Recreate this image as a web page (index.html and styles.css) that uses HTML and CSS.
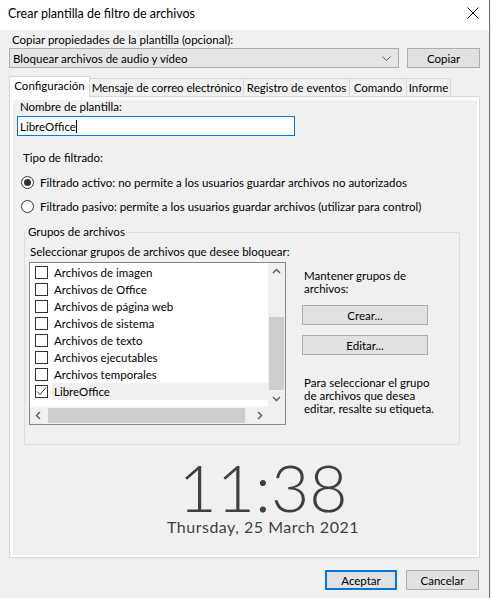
FILE: index.html
```html
<!DOCTYPE html>
<html lang="es">
<head>
<meta charset="utf-8">
<title>Crear plantilla de filtro de archivos</title>
<link rel="stylesheet" href="styles.css">
</head>
<body>
<div class="window">
  <div class="titlebar">
    <span class="title">Crear plantilla de filtro de archivos</span>
    <svg class="close" width="12" height="12" viewBox="0 0 12 12"><path d="M0.5 0.5 L11.5 11.5 M11.5 0.5 L0.5 11.5" stroke="#000" stroke-width="1" fill="none"/></svg>
  </div>
  <div class="main">
    <div class="copy-label">Copiar propiedades de la plantilla (opcional):</div>
    <div class="copy-row">
      <div class="combo">
        <span>Bloquear archivos de audio y vídeo</span>
        <svg width="9" height="5" viewBox="0 0 9 5"><path d="M0.5 0.5 L4.5 4.5 L8.5 0.5" stroke="#606060" stroke-width="1" fill="none"/></svg>
      </div>
      <button class="btn copy-btn">Copiar</button>
    </div>
    <div class="tabs">
      <div class="tab active t1">Configuración</div>
      <div class="tab t2">Mensaje de correo electrónico</div>
      <div class="tab t3">Registro de eventos</div>
      <div class="tab t4">Comando</div>
      <div class="tab t5">Informe</div>
    </div>
    <div class="panel">
      <div class="panel-inner">
        <div class="name-label">Nombre de plantilla:</div>
        <div class="name-input"><span>LibreOffice</span><span class="caret"></span></div>
        <div class="type-label">Tipo de filtrado:</div>
        <div class="radio-row first"><span class="radio on"></span><span>Filtrado activo: no permite a los usuarios guardar archivos no autorizados</span></div>
        <div class="radio-row"><span class="radio"></span><span>Filtrado pasivo: permite a los usuarios guardar archivos (utilizar para control)</span></div>
        <div class="group">
          <span class="group-title">Grupos de archivos</span>
          <div class="group-body">
            <div class="group-left">
              <div class="select-label">Seleccionar grupos de archivos que desee bloquear:</div>
              <div class="listbox">
                <div class="list-main">
                  <div class="items">
                    <div class="item"><span class="cb"></span><span class="lbl">Archivos de imagen</span></div>
                    <div class="item"><span class="cb"></span><span class="lbl">Archivos de Office</span></div>
                    <div class="item"><span class="cb"></span><span class="lbl">Archivos de página web</span></div>
                    <div class="item"><span class="cb"></span><span class="lbl">Archivos de sistema</span></div>
                    <div class="item"><span class="cb"></span><span class="lbl">Archivos de texto</span></div>
                    <div class="item"><span class="cb"></span><span class="lbl">Archivos ejecutables</span></div>
                    <div class="item"><span class="cb"></span><span class="lbl">Archivos temporales</span></div>
                    <div class="item sel"><span class="cb"><svg width="11" height="11" viewBox="0 0 11 11"><path d="M1 5.5 L4 8.5 L10 1.5" stroke="#333" stroke-width="1" fill="none"/></svg></span><span class="lbl">LibreOffice</span></div>
                  </div>
                  <div class="vscroll">
                    <svg class="arr" width="17" height="17" viewBox="0 0 17 17"><path d="M5 10 L8.5 6.5 L12 10" stroke="#606060" stroke-width="1.5" fill="none"/></svg>
                    <div class="vtrack"><div class="vthumb"></div></div>
                    <svg class="arr" width="17" height="17" viewBox="0 0 17 17"><path d="M5 7 L8.5 10.5 L12 7" stroke="#606060" stroke-width="1.5" fill="none"/></svg>
                  </div>
                </div>
                <div class="hrow">
                  <div class="hscroll">
                    <svg class="arr" width="17" height="17" viewBox="0 0 17 17"><path d="M10 5 L6.5 8.5 L10 12" stroke="#606060" stroke-width="1.5" fill="none"/></svg>
                    <div class="htrack"><div class="hthumb"></div></div>
                    <svg class="arr" width="17" height="17" viewBox="0 0 17 17"><path d="M7 5 L10.5 8.5 L7 12" stroke="#606060" stroke-width="1.5" fill="none"/></svg>
                  </div>
                  <div class="corner"></div>
                </div>
              </div>
            </div>
            <div class="group-right">
              <div class="maint">Mantener grupos de<br>archivos:</div>
              <button class="btn side-btn">Crear...</button>
              <button class="btn side-btn">Editar...</button>
              <div class="hint">Para seleccionar el grupo<br>de archivos que desea<br>editar, resalte su etiqueta.</div>
            </div>
          </div>
        </div>
        <div class="clock">
          <div class="time">11:38</div>
          <div class="date">Thursday, 25 March 2021</div>
        </div>
      </div>
    </div>
    <div class="footer">
      <button class="btn default">Aceptar</button>
      <button class="btn">Cancelar</button>
    </div>
  </div>
</div>
</body>
</html>
```
FILE: styles.css
```css
* { box-sizing: border-box; }
html, body { margin: 0; padding: 0; }
body {
  background: #f0f0f0;
  font-family: "Lato", "Liberation Sans", sans-serif;
  font-size: 11.5px;
  color: #000;
}
.window {
  width: 490px;
  height: 598px;
  border-right: 1px solid #707070;
  background: #f0f0f0;
}
.titlebar {
  height: 30px;
  background: #fff;
  display: flex;
  align-items: center;
  justify-content: space-between;
  padding: 0 10px 4px 8px;
}
.title { font-size: 12.5px; }
.close { display: block; }
.main { padding: 0 9px; }
.copy-label { height: 18px; line-height: 20px; padding-left: 3px; }
.copy-row { display: flex; gap: 8px; height: 20px; }
.combo {
  flex: 1;
  background: #e5e5e5;
  border: 1px solid #adadad;
  display: flex;
  align-items: center;
  justify-content: space-between;
  padding: 0 7px 0 3px;
}
.combo svg { display: block; }
.btn {
  font: inherit;
  color: #000;
  background: #e1e1e1;
  border: 1px solid #adadad;
  padding: 0;
  height: 20px;
  margin: 0;
}
.copy-btn { width: 73px; }
.tabs { display: flex; align-items: flex-end; height: 20px; margin-top: 8px; }
.tab {
  height: 18px;
  border: 1px solid #d9d9d9;
  border-bottom: none;
  margin-left: -1px;
  text-align: center;
  line-height: 17px;
  background: #f0f0f0;
  white-space: nowrap;
}
.tab.active {
  height: 21px;
  margin-left: 0;
  margin-bottom: -1px;
  background: #fff;
  position: relative;
  z-index: 1;
  line-height: 17px;
}
.t1 { width: 81px; }
.t2 { width: 155px; letter-spacing: -0.1px; }
.t3 { width: 107px; }
.t4 { width: 58px; }
.t5 { width: 45px; }
.panel {
  height: 462px;
  border: 1px solid #d9d9d9;
  background: #fff;
  padding: 3px 2px 2px 3px;
}
.panel-inner { height: 100%; background: #f0f0f0; position: relative; }
.name-label { height: 16px; line-height: 14px; padding-left: 7px; }
.name-input {
  margin-left: 4px;
  width: 278px;
  height: 20px;
  border: 1px solid #0078d7;
  background: #fff;
  padding-left: 2px;
  display: flex;
  align-items: center;
}
.caret { display: inline-block; width: 1px; height: 13px; background: #000; }
.type-label { margin-top: 15px; line-height: 14px; padding-left: 10px; }
.radio-row { height: 24px; display: flex; align-items: center; gap: 6px; padding-left: 8px; white-space: nowrap; }
.radio-row.first { margin-top: 5px; }
.radio {
  width: 13px; height: 13px;
  border: 1px solid #333;
  border-radius: 50%;
  background: #fff;
  position: relative;
  flex: none;
}
.radio.on::after {
  content: "";
  position: absolute;
  left: 2px; top: 2px;
  width: 7px; height: 7px;
  border-radius: 50%;
  background: #333;
}
.group {
  margin-top: 14px;
  margin-left: 11px;
  width: 436px;
  height: 213px;
  border: 1px solid #dcdcdc;
  border-radius: 2px;
}
.group-title {
  display: block;
  width: max-content;
  margin-top: -8px;
  margin-left: 2px;
  padding: 0 1px;
  line-height: 14px;
  height: 14px;
  background: #f0f0f0;
}
.group-body { display: flex; gap: 16px; }
.group-left { padding-left: 4px; width: 261px; flex: none; }
.select-label { line-height: 14px; padding-left: 1px; margin-top: 6px; white-space: nowrap; }
.listbox {
  margin-top: 3px;
  width: 257px;
  height: 163px;
  border: 1px solid #828790;
  background: #fff;
  display: flex;
  flex-direction: column;
}
.list-main { display: flex; height: 144px; }
.items { flex: 1; padding-top: 1px; }
.item { height: 17px; display: flex; align-items: center; padding-left: 5px; gap: 4px; }
.cb {
  width: 13px; height: 13px;
  border: 1px solid #333;
  background: #fff;
  flex: none;
  display: flex;
}
.cb svg { display: block; }
.lbl { flex: 1; height: 17px; line-height: 17px; padding-left: 2px; }
.item.sel .lbl { background: #f0f0f0; }
.vscroll { width: 17px; background: #f0f0f0; display: flex; flex-direction: column; }
.arr { display: block; flex: none; }
.vtrack { flex: 1; position: relative; }
.vthumb { position: absolute; left: 1px; right: 1px; top: 37px; height: 73px; background: #cdcdcd; }
.hrow { display: flex; height: 17px; }
.hscroll { flex: 1; background: #f0f0f0; display: flex; }
.htrack { flex: 1; position: relative; }
.hthumb { position: absolute; top: 1px; bottom: 1px; left: 1px; width: 197px; background: #cdcdcd; }
.corner { width: 17px; background: #f0f0f0; }
.group-right { width: 126px; padding-top: 31px; flex: none; }
.maint { line-height: 12.5px; padding-left: 2px; white-space: nowrap; }
.side-btn { display: block; width: 126px; margin-top: 10px; }
.maint + .side-btn { margin-top: 10px; }
.hint { margin-top: 21px; line-height: 13px; padding-left: 2px; white-space: nowrap; }
.clock {
  position: absolute;
  left: 140px;
  top: 361px;
  width: 220px;
  text-align: center;
  color: #404040;
}
.time { font-family: "Lato", sans-serif; font-weight: 300; font-size: 66px; line-height: 52px; height: 52px; }
.date { font-family: "Lato", sans-serif; font-size: 16px; line-height: 18px; margin-top: 5px; letter-spacing: 0.5px; }
.footer { display: flex; justify-content: flex-end; gap: 9px; margin-top: 12px; padding-right: 1px; }
.footer .btn { width: 73px; }
.footer .btn.default { width: 72px; border: 2px solid #0078d7; }
```
